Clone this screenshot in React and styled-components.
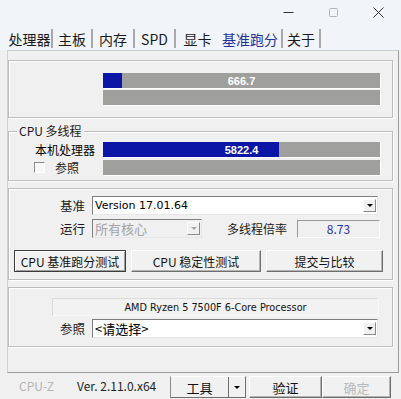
import React from "react";
import styled, { createGlobalStyle } from "styled-components";

const GlobalStyle = createGlobalStyle`
  html, body { margin: 0; padding: 0; }
  body {
    width: 401px;
    height: 399px;
    overflow: hidden;
    background: #f0f0f0;
    font-family: "Noto Sans CJK SC", "Noto Sans", sans-serif;
    font-size: 12px;
    color: #111;
  }
  * { box-sizing: border-box; }
`;

const tabs = [
  { label: "处理器", w: 45 },
  { label: "主板", w: 40 },
  { label: "内存", w: 42 },
  { label: "SPD", w: 41 },
  { label: "显卡", w: 43, noSep: true },
  { label: "基准跑分", w: 64, active: true },
  { label: "关于", w: 38 },
];

const App = () => {
  return (
    <Window>
      <GlobalStyle />
      <TitleBar>
        <WinBtn>
          <svg width="11" height="11" viewBox="0 0 11 11">
            <line x1="0.5" y1="5.5" x2="10.5" y2="5.5" stroke="#333" strokeWidth="1" />
          </svg>
        </WinBtn>
        <WinBtn>
          <svg width="11" height="11" viewBox="0 0 11 11">
            <rect x="1.5" y="1.5" width="8" height="8" rx="1" fill="none" stroke="#b4b4b4" strokeWidth="1" />
          </svg>
        </WinBtn>
        <WinBtn>
          <svg width="11" height="11" viewBox="0 0 11 11">
            <path d="M0.5 0.5 L10.5 10.5 M10.5 0.5 L0.5 10.5" stroke="#333" strokeWidth="1" />
          </svg>
        </WinBtn>
      </TitleBar>

      <TabStrip>
        {tabs.map((t) => (
          <Tab key={t.label} $w={t.w} $active={t.active} $noSep={t.noSep}>
            {t.label}
          </Tab>
        ))}
      </TabStrip>

      <Panel>
        {/* single thread */}
        <Group $h={58} $mt={9}>
          <BarGrid $pt={12} $gap={2}>
            <span />
            <Bar>
              <Fill style={{ width: "6.9%" }} />
              <BarText>666.7</BarText>
            </Bar>
            <span />
            <Bar />
          </BarGrid>
        </Group>

        {/* multi thread */}
        <Group $h={50} $mt={13}>
          <Legend>CPU 多线程</Legend>
          <BarGrid $pt={10} $gap={3}>
            <RowLabel>本机处理器</RowLabel>
            <Bar>
              <Fill style={{ width: "63.5%" }} />
              <BarText>5822.4</BarText>
            </Bar>
            <CheckLabel>
              <CheckBox />
              参照
            </CheckLabel>
            <Bar />
          </BarGrid>
        </Group>

        <Group $h={92} $mt={7} $pt={7}>
          <FieldRow>
            <FieldLabel>基准</FieldLabel>
            <Combo $w={286}>
              <ComboText $latin>Version 17.01.64</ComboText>
              <DropBtn>
                <Arrow />
              </DropBtn>
            </Combo>
          </FieldRow>
          <FieldRow $mt={4}>
            <FieldLabel>运行</FieldLabel>
            <Combo $w={110} $disabled>
              <ComboText $disabled>所有核心</ComboText>
              <DropBtn>
                <Arrow $disabled />
              </DropBtn>
            </Combo>
            <RatioLabel>多线程倍率</RatioLabel>
            <ValueBox>8.73</ValueBox>
          </FieldRow>
          <ButtonRow>
            <Button $w={112} $default>CPU 基准跑分测试</Button>
            <Button $w={130}>CPU 稳定性测试</Button>
            <Button $w={117}>提交与比较</Button>
          </ButtonRow>
        </Group>

        <Group $h={60} $mt={7} $pt={10}>
          <NameBox>AMD Ryzen 5 7500F 6-Core Processor</NameBox>
          <FieldRow $mt={3}>
            <FieldLabel>参照</FieldLabel>
            <Combo $w={286}>
              <ComboText $big>&lt;请选择&gt;</ComboText>
              <DropBtn>
                <Arrow />
              </DropBtn>
            </Combo>
          </FieldRow>
        </Group>
      </Panel>

      <BottomBar>
        <Version>
          <Brand>CPU-Z</Brand>
          Ver. 2.11.0.x64
        </Version>
        <ToolButton>
          <ToolMain>工具</ToolMain>
          <ToolArrow>
            <Arrow />
          </ToolArrow>
        </ToolButton>
        <Button $w={73} $h={22} $big>验证</Button>
        <Button $w={69} $h={22} $big $faded>确定</Button>
      </BottomBar>
    </Window>
  );
};

export default App;

const Window = styled.div`
  width: 401px;
  height: 399px;
  display: flex;
  flex-direction: column;
  background: #f0f0f0;
`;

const TitleBar = styled.div`
  height: 25px;
  flex: none;
  display: flex;
  justify-content: flex-end;
  align-items: center;
  background: #f1f4f9;
`;

const WinBtn = styled.div`
  width: 45px;
  height: 25px;
  display: flex;
  align-items: center;
  justify-content: center;
  svg { display: block; }
`;

const TabStrip = styled.div`
  height: 25px;
  flex: none;
  display: flex;
  align-items: flex-end;
  padding-left: 8px;
  background: #f1f4f9;
`;

const Tab = styled.div`
  width: ${(p) => p.$w}px;
  height: 19px;
  margin-bottom: 2px;
  display: flex;
  align-items: center;
  justify-content: center;
  font-size: 14px;
  line-height: 1;
  color: ${(p) => (p.$active ? "#26319c" : "#1a1a1a")};
  border-right: ${(p) => (p.$noSep ? "0" : "2px solid #a9a9a9")};
`;

const Panel = styled.div`
  height: 323px;
  flex: none;
  width: 392px;
  margin-left: 7px;
  border: 1px solid;
  border-color: #cbcbcb #9c9c9c #9c9c9c #d0d0d0;
  background: #f0f0f0;
  display: flex;
  flex-direction: column;
`;

const Group = styled.div`
  position: relative;
  width: 385px;
  height: ${(p) => p.$h}px;
  margin-top: ${(p) => p.$mt}px;
  padding-top: ${(p) => p.$pt || 0}px;
  border: 1px solid #bdbdbd;
  box-shadow: inset 1px 1px 0 #fff, 1px 1px 0 #fff;
  flex: none;
`;

const Legend = styled.span`
  position: absolute;
  top: -9px;
  left: 8px;
  padding: 0 2px;
  background: #f0f0f0;
  font-size: 12px;
  line-height: 16px;
  color: #1a1a1a;
`;

const BarGrid = styled.div`
  display: grid;
  grid-template-columns: 94px 277px;
  row-gap: ${(p) => p.$gap}px;
  padding-top: ${(p) => p.$pt}px;
  align-items: center;
`;

const RowLabel = styled.span`
  justify-self: end;
  padding-right: 8px;
  font-size: 12px;
  line-height: 15px;
  color: #000;
`;

const CheckLabel = styled.span`
  display: flex;
  align-items: center;
  gap: 10px;
  padding-left: 25px;
  font-size: 12px;
  line-height: 15px;
  color: #222;
`;

const CheckBox = styled.span`
  width: 11px;
  height: 11px;
  background: #f7f7f7;
  border: 1px solid;
  border-color: #8a8a8a #fff #fff #8a8a8a;
`;

const Bar = styled.div`
  position: relative;
  height: 15px;
  background: #9fa09e;
  box-shadow: 1px 1px 0 #fff;
`;

const Fill = styled.div`
  height: 100%;
  background: #0c16a6;
`;

const BarText = styled.span`
  position: absolute;
  inset: 0;
  display: flex;
  align-items: center;
  justify-content: center;
  color: #fff;
  font: bold 11px "Liberation Sans", Arial, sans-serif;
`;

const FieldRow = styled.div`
  display: flex;
  align-items: center;
  margin-top: ${(p) => p.$mt || 0}px;
`;

const FieldLabel = styled.span`
  width: 83px;
  padding-right: 7px;
  text-align: right;
  font-size: 12.5px;
  line-height: 19px;
  color: #1a1a1a;
`;

const Combo = styled.div`
  width: ${(p) => p.$w}px;
  height: 19px;
  display: flex;
  align-items: center;
  padding: 0 1px 0 2px;
  background: ${(p) => (p.$disabled ? "#f0f0f0" : "#fff")};
  border: 1px solid;
  border-color: #7e7e7e #e6e6e6 #e6e6e6 #7e7e7e;
`;

const ComboText = styled.span`
  flex: 1;
  white-space: nowrap;
  font-family: ${(p) =>
    p.$latin ? '"DejaVu Sans", Verdana, sans-serif' : '"Noto Sans CJK SC", sans-serif'};
  font-size: ${(p) => (p.$latin ? "11px" : p.$big ? "13px" : "13px")};
  line-height: 17px;
  color: ${(p) => (p.$disabled ? "#a3a3a3" : "#000")};
`;

const DropBtn = styled.span`
  width: 13px;
  height: 13px;
  flex: none;
  display: flex;
  align-items: center;
  justify-content: center;
  background: #f0f0f0;
  border: 1px solid;
  border-color: #fff #8a8a8a #8a8a8a #fff;
`;

const Arrow = styled.span`
  width: 0;
  height: 0;
  border-left: 3px solid transparent;
  border-right: 3px solid transparent;
  border-top: 3px solid ${(p) => (p.$disabled ? "#a8a8a8" : "#000")};
`;

const RatioLabel = styled.span`
  margin-left: 25px;
  margin-right: 10px;
  font-size: 12px;
  line-height: 19px;
  color: #1a1a1a;
`;

const ValueBox = styled.div`
  width: 83px;
  height: 18px;
  display: flex;
  align-items: center;
  justify-content: center;
  background: #f0f0f0;
  border: 1px solid;
  border-color: #9a9a9a #fff #fff #9a9a9a;
  font-size: 12px;
  color: #2c31a8;
`;

const ButtonRow = styled.div`
  display: flex;
  gap: 5px;
  margin-top: 12px;
  padding-left: 5px;
`;

const Button = styled.div`
  width: ${(p) => p.$w}px;
  height: ${(p) => p.$h || 22}px;
  display: flex;
  align-items: center;
  justify-content: center;
  background: #f1f1f1;
  border: 1px solid;
  border-color: ${(p) => (p.$default ? "#3c3c3c" : "#fff #6e6e6e #6e6e6e #fff")};
  box-shadow: ${(p) =>
    p.$default ? "inset 1px 1px 0 #fff, inset -1px -1px 0 #a0a0a0" : "inset -1px -1px 0 #b4b4b4"};
  font-size: ${(p) => (p.$big ? "13px" : "12px")};
  white-space: nowrap;
  color: ${(p) => (p.$faded ? "#b9b9b9" : "#111")};
`;

const NameBox = styled.div`
  width: 327px;
  height: 18px;
  margin-left: 43px;
  display: flex;
  align-items: center;
  justify-content: center;
  background: #f2f2f2;
  border: 1px solid;
  border-color: #dadada #fafafa #fafafa #dadada;
  font-family: "DejaVu Sans", Verdana, sans-serif;
  font-size: 9.7px;
  color: #111;
`;

const BottomBar = styled.div`
  flex: 1;
  display: flex;
  align-items: flex-start;
  padding-top: 3px;
`;

const Version = styled.div`
  width: 170px;
  padding-left: 15px;
  display: flex;
  font-size: 12px;
  line-height: 20px;
  color: #222;
`;

const Brand = styled.span`
  width: 62px;
  padding-left: 4px;
  color: #b5b5b5;
`;

const ToolButton = styled.div`
  width: 76px;
  height: 22px;
  margin-right: 3px;
  display: flex;
  background: #f1f1f1;
  border: 1px solid;
  border-color: #fff #6e6e6e #6e6e6e #8a8a8a;
`;

const ToolMain = styled.span`
  flex: 1;
  display: flex;
  align-items: center;
  justify-content: center;
  font-size: 13px;
  color: #111;
`;

const ToolArrow = styled.span`
  width: 17px;
  display: flex;
  align-items: center;
  justify-content: center;
  border-left: 1px solid #6e6e6e;
`;
